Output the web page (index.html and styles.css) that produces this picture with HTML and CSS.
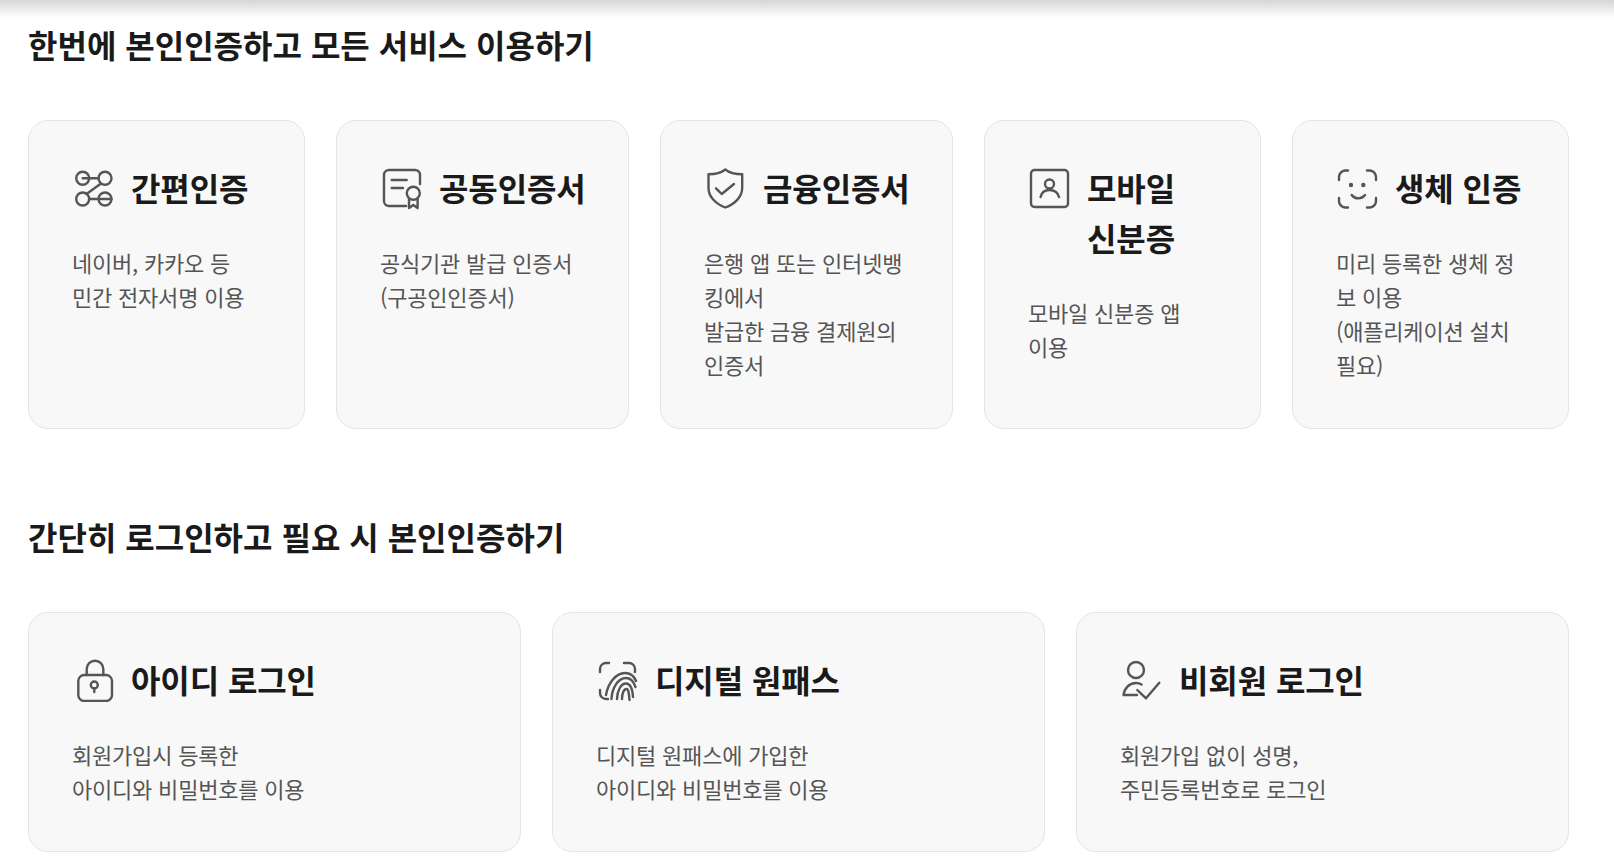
FILE: index.html
```html
<!DOCTYPE html>
<html lang="ko">
<head>
<meta charset="utf-8">
<title>본인인증</title>
<link rel="stylesheet" href="styles.css">
</head>
<body>
<div class="top-shade"></div>
<main class="page">
  <section class="group">
    <h2 class="group-title">한번에 본인인증하고 모든 서비스 이용하기</h2>
    <div class="row row-five">
      <article class="card">
        <div class="card-head">
          <svg class="icon" viewBox="0 0 44 44"><circle cx="9.7" cy="12.3" r="6.500"/><circle cx="32" cy="12.3" r="6.500"/><circle cx="9.7" cy="33" r="6.500"/><circle cx="32" cy="33" r="6.500"/><path d="M9.7 12.3H25.500M28 17.500L13.500 28M16 33H38.500"/></svg>
          <h3 class="card-title">간편인증</h3>
        </div>
        <p class="card-text">네이버, 카카오 등<br>민간 전자서명 이용</p>
      </article>
      <article class="card">
        <div class="card-head">
          <svg class="icon" viewBox="0 0 44 44"><path d="M25 40H8a5 5 0 0 1-5-5V9a5 5 0 0 1 5-5h26a5 5 0 0 1 5 5v9"/><path d="M10.7 14H25.7M10.7 22H22"/><circle cx="32.3" cy="27.3" r="6.500"/><path d="M28 33V42L32.3 39L36.6 42V33"/></svg>
          <h3 class="card-title">공동인증서</h3>
        </div>
        <p class="card-text">공식기관 발급 인증서<br>(구공인인증서)</p>
      </article>
      <article class="card">
        <div class="card-head">
          <svg class="icon" viewBox="0 0 44 44"><path d="M20.3 3.500C16 7 10 8.300 3.500 8.300V22C3.500 31 11 38 20.3 41.500C29.600 38 37.200 31 37.200 22V8.300C30.600 8.300 24.600 7 20.3 3.500Z"/><path d="M11 22.300L16.700 28L29 18"/></svg>
          <h3 class="card-title">금융인증서</h3>
        </div>
        <p class="card-text">은행 앱 또는 인터넷뱅킹에서<br>발급한 금융 결제원의 인증서</p>
      </article>
      <article class="card">
        <div class="card-head">
          <svg class="icon" viewBox="0 0 44 44"><rect x="2" y="4" width="37" height="37" rx="3.500"/><circle cx="20.500" cy="18" r="4.500"/><path d="M11.600 31C12.500 26.500 16 24 20.500 24S28.800 26.500 30 31"/></svg>
          <h3 class="card-title">모바일<br>신분증</h3>
        </div>
        <p class="card-text">모바일 신분증 앱<br>이용</p>
      </article>
      <article class="card">
        <div class="card-head">
          <svg class="icon" viewBox="0 0 44 44"><path d="M11 4.500H8A6.500 6.500 0 0 0 2 11V14M30 4.500H33A6.500 6.500 0 0 1 39 11V14M2 32V35A6.500 6.500 0 0 0 8 41.500H11M39 32V35A6.500 6.500 0 0 1 33 41.500H30"/><path d="M14.700 29C18 33.500 24.500 33.500 28 29"/><circle class="dot" cx="14" cy="19" r="2.200"/><circle class="dot" cx="26.300" cy="19" r="2.200"/></svg>
          <h3 class="card-title">생체 인증</h3>
        </div>
        <p class="card-text">미리 등록한 생체 정보 이용<br>(애플리케이션 설치 필요)</p>
      </article>
    </div>
  </section>
  <section class="group">
    <h2 class="group-title">간단히 로그인하고 필요 시 본인인증하기</h2>
    <div class="row row-three">
      <article class="card">
        <div class="card-head">
          <svg class="icon" viewBox="0 0 44 44"><rect x="5.300" y="17" width="33.700" height="26" rx="6"/><path d="M13.700 17V11A8.300 8.300 0 0 1 30.300 11V17"/><circle cx="21.300" cy="27" r="3.500"/><path d="M21.300 30.500V34"/></svg>
          <h3 class="card-title">아이디 로그인</h3>
        </div>
        <p class="card-text">회원가입시 등록한<br>아이디와 비밀번호를 이용</p>
      </article>
      <article class="card">
        <div class="card-head">
          <svg class="icon" viewBox="0 0 44 44"><path d="M3 14V11A6 6 0 0 1 9 5H12M27 5H32A6 6 0 0 1 38 11V14M3 32V35A6 6 0 0 0 9 41H11"/><path d="M9 37C11 25 19 15 28 15C33 15 37 18 39 23M14.500 41C15 30 21 20 29 20C33 20 36.500 23 38.500 29M20 41C20 33 24 25.500 29 25.500C33.500 25.500 35.500 31 36 39M25 41C25 35 27 31 29.500 31C31.500 31 32 36 32.500 42"/></svg>
          <h3 class="card-title">디지털 원패스</h3>
        </div>
        <p class="card-text">디지털 원패스에 가입한<br>아이디와 비밀번호를 이용</p>
      </article>
      <article class="card">
        <div class="card-head">
          <svg class="icon" viewBox="0 0 44 44"><circle cx="15" cy="12" r="8"/><path d="M16 37H2.500C3.500 30 8.500 25 15 25C17 25 19 25.500 20.500 26.500"/><path d="M16.300 32L25 40.300L38.300 24.700"/></svg>
          <h3 class="card-title">비회원 로그인</h3>
        </div>
        <p class="card-text">회원가입 없이 성명,<br>주민등록번호로 로그인</p>
      </article>
    </div>
  </section>
</main>
</body>
</html>
```

FILE: styles.css
```css
* {
  box-sizing: border-box;
}

html,
body {
  margin: 0;
  height: 861px;
  overflow: hidden;
  background: #fff;
}

body {
  font-family: "Noto Sans CJK KR", "Noto Sans", sans-serif;
  color: #1a1a1a;
}

.top-shade {
  height: 18px;
  background: linear-gradient(#d6d6d6, #fff);
}

.page {
  padding: 0 45px 0 28px;
}

.group + .group {
  margin-top: 81px;
}

.group-title {
  margin: 0 0 50px;
  font-size: 32px;
  line-height: 52px;
  font-weight: 700;
}

.row {
  display: grid;
  column-gap: 31px;
}

.row-five {
  grid-template-columns: 277fr 293fr 293fr 277fr 277fr;
  grid-template-rows: 309px;
}

.row-three {
  grid-template-columns: repeat(3, 1fr);
  grid-template-rows: 240px;
}

.card {
  min-width: 0;
  padding: 41px 40px 30px 43px;
  background: #f8f8f8;
  border: 1px solid #e4e4e4;
  border-radius: 20px;
}

.card-head {
  display: flex;
  align-items: flex-start;
  margin-bottom: 33px;
}

.icon {
  flex: none;
  width: 44px;
  height: 44px;
  margin: 4px 14px 0 1px;
  fill: none;
  stroke: #555;
  stroke-width: 2.4;
  stroke-linecap: round;
  stroke-linejoin: round;
}

.icon .dot {
  fill: #555;
  stroke: none;
}

.card-title {
  margin: 0;
  font-size: 32px;
  line-height: 50px;
  font-weight: 700;
  letter-spacing: -0.1px;
}

.card-text {
  margin: 0;
  font-size: 22px;
  line-height: 34px;
  letter-spacing: -0.2px;
  color: #555;
}
```
